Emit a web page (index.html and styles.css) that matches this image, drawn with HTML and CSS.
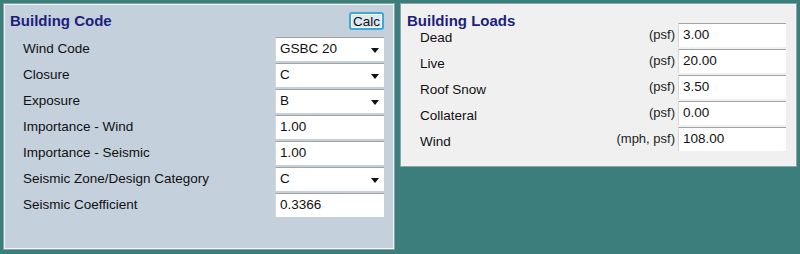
FILE: index.html
```html
<!DOCTYPE html>
<html>
<head>
<meta charset="utf-8">
<link rel="stylesheet" href="styles.css">
</head>
<body>
<div class="desk">
  <section class="panel code">
    <div class="head">
      <h2 class="title">Building Code</h2>
      <button class="calc">Calc</button>
    </div>
    <div class="grid code-grid">
      <div class="label">Wind Code</div><div class="field drop">GSBC 20<span class="arrow"></span></div>
      <div class="label">Closure</div><div class="field drop">C<span class="arrow"></span></div>
      <div class="label">Exposure</div><div class="field drop">B<span class="arrow"></span></div>
      <div class="label">Importance - Wind</div><div class="field">1.00</div>
      <div class="label">Importance - Seismic</div><div class="field">1.00</div>
      <div class="label">Seismic Zone/Design Category</div><div class="field drop">C<span class="arrow"></span></div>
      <div class="label">Seismic Coefficient</div><div class="field">0.3366</div>
    </div>
  </section>
  <section class="panel loads">
    <h2 class="title loads-title">Building Loads</h2>
    <div class="grid loads-grid">
      <div class="label">Dead</div><div class="unit">(psf)</div><div class="field">3.00</div>
      <div class="label">Live</div><div class="unit">(psf)</div><div class="field">20.00</div>
      <div class="label">Roof Snow</div><div class="unit">(psf)</div><div class="field">3.50</div>
      <div class="label">Collateral</div><div class="unit">(psf)</div><div class="field">0.00</div>
      <div class="label">Wind</div><div class="unit">(mph, psf)</div><div class="field">108.00</div>
    </div>
  </section>
</div>
</body>
</html>
```
FILE: styles.css
```css
* { box-sizing: border-box; }
html, body { margin: 0; padding: 0; }
body {
  background: #3b7e7b;
  font-family: "Liberation Sans", Arial, sans-serif;
  font-size: 13.5px;
  color: #111;
  width: 800px;
  height: 254px;
  overflow: hidden;
}
.desk {
  display: flex;
  align-items: flex-start;
  gap: 5px;
  padding: 3px 3px 0 3px;
}
.panel {
  border: 1px solid #8aa3a6;
  box-shadow: inset 0 0 0 1px #f2f5f7;
}
.code {
  width: 392px;
  height: 247px;
  background: #c4d0dc;
  padding: 8px 10px 0 6px;
}
.loads {
  width: 397px;
  height: 164px;
  background: #f0f0f0;
  padding: 10px 10px 0 6px;
}
.head {
  display: flex;
  justify-content: space-between;
  align-items: center;
  height: 18px;
}
.title {
  margin: 0;
  font-size: 15px;
  font-weight: bold;
  color: #1c1f7c;
  line-height: 18px;
}
.loads-title {
  line-height: 14px;
  height: 14px;
}
.calc {
  width: 35px;
  height: 18px;
  padding: 0;
  border: 2px solid #3ea6d8;
  border-radius: 3px;
  background: #dce9f1;
  box-shadow: inset 0 0 0 1px #ffffff;
  font-family: "Liberation Sans", Arial, sans-serif;
  font-size: 13.5px;
  color: #111;
  line-height: 13px;
}
.grid {
  display: grid;
  row-gap: 2px;
  grid-auto-rows: 24px;
  align-items: center;
}
.code-grid {
  margin-top: 7px;
  grid-template-columns: 1fr 109px;
}
.loads-grid {
  margin-top: -5px;
  grid-template-columns: 1fr auto 108px;
}
.label {
  padding-left: 13px;
  white-space: nowrap;
  line-height: 14px;
}
.loads .label { padding-top: 6px; }
.unit {
  text-align: right;
  padding-right: 3px;
  font-size: 13px;
  line-height: 14px;
  color: #222;
}
.field {
  height: 24px;
  background: #ffffff;
  border-top: 1px solid #a3a3a3;
  border-left: 1px solid #d6d6d6;
  padding: 0 4px;
  line-height: 22px;
  position: relative;
  white-space: nowrap;
}
.arrow {
  position: absolute;
  right: 5px;
  top: 10px;
  width: 0;
  height: 0;
  border-left: 4.5px solid transparent;
  border-right: 4.5px solid transparent;
  border-top: 5px solid #111;
}
```
